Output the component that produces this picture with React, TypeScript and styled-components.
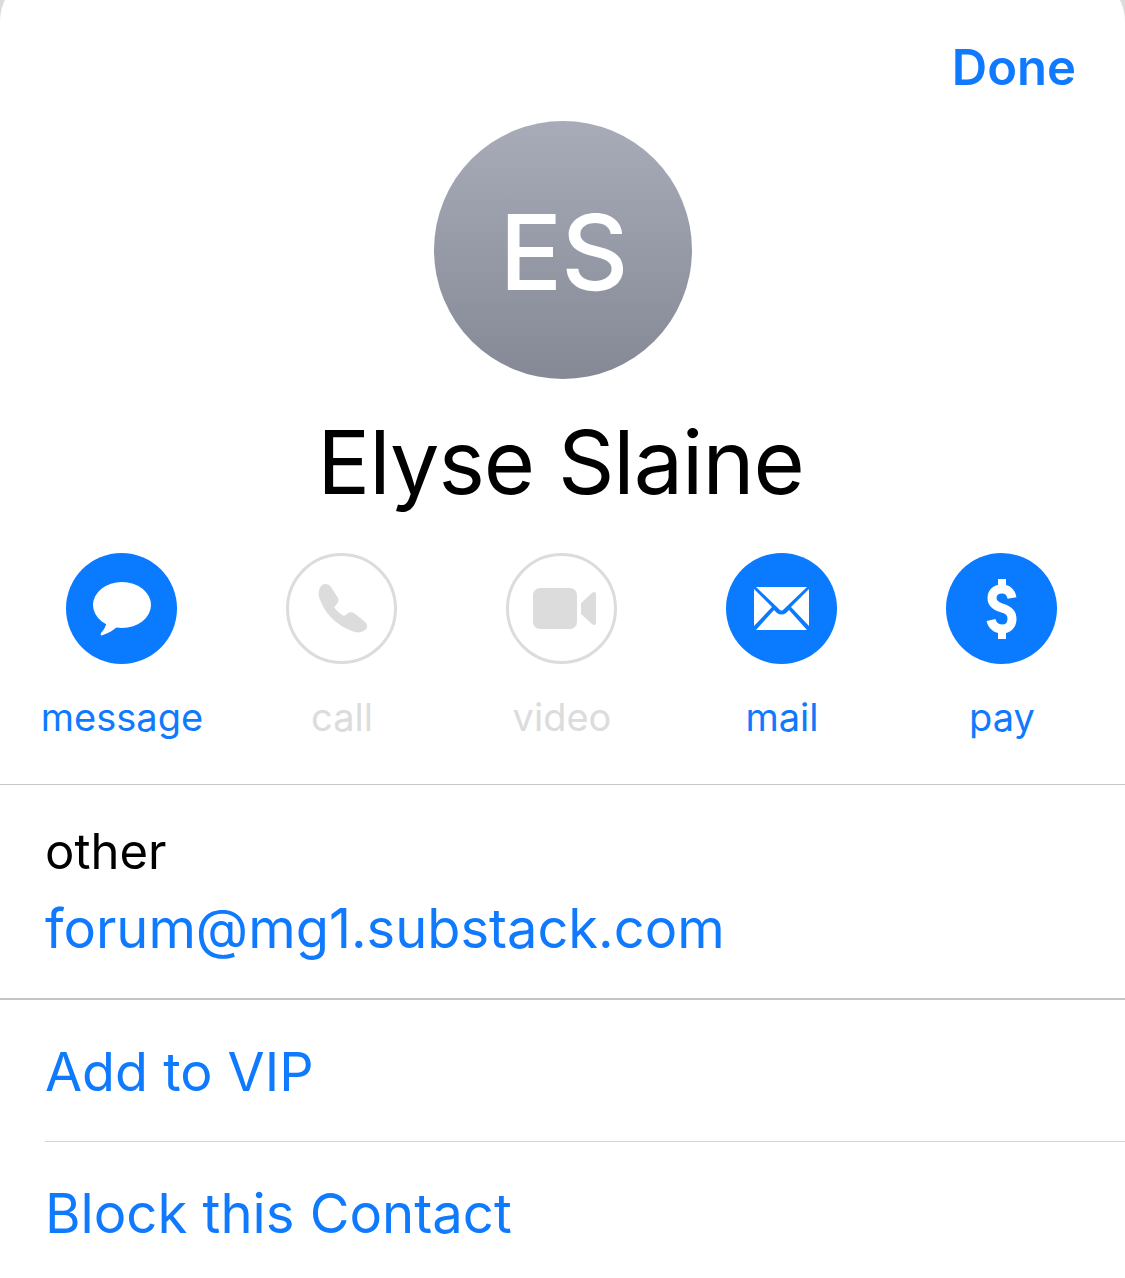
import React from 'react'
import styled, { createGlobalStyle } from 'styled-components'

const blue = '#107aff'
const actionBlue = '#0a7aff'
const muted = '#dcdcdc'

const GlobalStyle = createGlobalStyle`
  html, body {
    margin: 0;
    padding: 0;
    height: 1278px;
    overflow: hidden;
    background: #dcdcdc;
    font-family: Inter, "Liberation Sans", sans-serif;
  }
`

const Sheet = styled.main`
  margin-top: -29px;
  height: 1307px;
  background: #fff;
  border-radius: 51px 51px 0 0;
  overflow: hidden;
`

const TopBar = styled.header`
  display: flex;
  justify-content: flex-end;
  height: 150px;
  padding: 71px 49px 0 0;
  box-sizing: border-box;
`

const DoneButton = styled.button`
  border: 0;
  padding: 0;
  background: none;
  font: 600 49px/1 Inter, sans-serif;
  color: ${blue};
  height: 50px;
`

const Hero = styled.section`
  display: flex;
  flex-direction: column;
  align-items: center;
`

const Avatar = styled.div`
  width: 258px;
  height: 258px;
  box-sizing: border-box;
  padding: 4px 0 0 2px;
  border-radius: 50%;
  background: linear-gradient(#a7acb8, #858995);
  color: #fff;
  display: flex;
  align-items: center;
  justify-content: center;
  font-size: 104px;
  font-weight: 540;
  letter-spacing: -1px;
`

const Name = styled.h1`
  margin: 28px 4px 0 0;
  font-size: 88px;
  line-height: 110px;
  font-weight: 400;
  color: #000;
  letter-spacing: -1px;
`

const Actions = styled.nav`
  display: grid;
  grid-template-columns: repeat(5, 220px);
  padding: 36px 0 0 11px;
  height: 268px;
  box-sizing: border-box;
  border-bottom: 1px solid #c8c8c8;
`

const Action = styled.div<{ $off?: boolean }>`
  display: flex;
  flex-direction: column;
  align-items: center;
  color: ${(p) => (p.$off ? muted : blue)};
  font-size: 38px;
  line-height: 44px;
`

const ActionLabel = styled.span`
  margin: 31px 0 0 2px;
`

const Disc = styled.div<{ $off?: boolean }>`
  width: 111px;
  height: 111px;
  box-sizing: border-box;
  border-radius: 50%;
  background: ${(p) => (p.$off ? '#fff' : actionBlue)};
  border: ${(p) => (p.$off ? `3px solid ${muted}` : '0')};
  display: flex;
  align-items: center;
  justify-content: center;
`

const Glyph = styled.svg`
  width: 111px;
  height: 111px;
  flex: none;
`

const EmailRow = styled.section`
  height: 215px;
  padding: 37px 0 0 45px;
  box-sizing: border-box;
  border-bottom: 2px solid #c4c4c4;
`

const RowLabel = styled.div`
  font-size: 49px;
  line-height: 60px;
  color: #000;
`

const EmailLink = styled.a`
  display: block;
  margin-top: 11px;
  font-size: 54.2px;
  line-height: 70px;
  color: ${blue};
`

const LinkRow = styled.a<{ $last?: boolean }>`
  display: block;
  margin-left: 45px;
  height: 141px;
  line-height: 143px;
  font-size: ${(p) => (p.$last ? '54.4px' : '53.8px')};
  color: ${blue};
  border-bottom: ${(p) => (p.$last ? '0' : '1px solid #d4d4d4')};
`

const MessageIcon = () => (
  <Glyph viewBox="0 0 111 111">
    <ellipse cx="56" cy="52" rx="29" ry="23" fill="#fff" />
    <path d="M41 68 C40 73 38 77 35 80 C34 82 35 83 37 82 C43 80 48 77 52 73 Z" fill="#fff" />
  </Glyph>
)

const PhoneIcon = () => (
  <Glyph viewBox="0 0 111 111">
    <path
      d="M36 32 C39 30 43 31 45 34 L52 45 C53 48 52 50 50 52 L48 54 C50 57 54 61 58 63 L61 61 C63 59 66 59 68 60 L78 68 C82 71 82 75 79 77 C75 80 70 80 66 78 C50 72 38 60 33 44 C32 39 33 35 36 32 Z"
      fill={muted}
    />
  </Glyph>
)

const VideoIcon = () => (
  <Glyph viewBox="0 0 111 111">
    <rect x="27" y="35" width="44" height="41" rx="7" fill={muted} />
    <path d="M75 50 L86 40 C88 38 90 39 90 41 V70 C90 72 88 73 86 71 L75 61 Z" fill={muted} />
  </Glyph>
)

const MailIcon = () => (
  <Glyph viewBox="0 0 111 111">
    <path d="M30 34 H81 L58 56 C56 58 55 58 53 56 Z" fill="#fff" />
    <path d="M28 36 L46 54 L28 73 Z" fill="#fff" />
    <path d="M83 36 L65 54 L83 73 Z" fill="#fff" />
    <path d="M30 77 L48 57 L51 60 C54 62 57 62 60 60 L63 57 L81 77 Z" fill="#fff" />
  </Glyph>
)

const DollarIcon = () => (
  <Glyph viewBox="0 0 111 111">
    <path
      d="M66 45 C65 39 61 36 56 36 C49 36 46 40 46 45 C46 50 49 53 56 55 C63 57 66 60 66 66 C66 72 62 76 56 76 C50 76 46 72 45 67"
      fill="none"
      stroke="#fff"
      strokeWidth="9"
    />
    <path d="M52 26 H60 V36 H52 Z M52 76 H60 V86 H52 Z" fill="#fff" />
  </Glyph>
)

const actions = [
  { label: 'message', icon: <MessageIcon /> },
  { label: 'call', icon: <PhoneIcon />, off: true },
  { label: 'video', icon: <VideoIcon />, off: true },
  { label: 'mail', icon: <MailIcon /> },
  { label: 'pay', icon: <DollarIcon /> },
]

const App = () => (
  <>
    <GlobalStyle />
    <Sheet>
      <TopBar>
        <DoneButton>Done</DoneButton>
      </TopBar>
      <Hero>
        <Avatar>ES</Avatar>
        <Name>Elyse Slaine</Name>
      </Hero>
      <Actions>
        {actions.map((a) => (
          <Action key={a.label} $off={a.off}>
            <Disc $off={a.off}>{a.icon}</Disc>
            <ActionLabel>{a.label}</ActionLabel>
          </Action>
        ))}
      </Actions>
      <EmailRow>
        <RowLabel>other</RowLabel>
        <EmailLink>forum@mg1.substack.com</EmailLink>
      </EmailRow>
      <LinkRow>Add to VIP</LinkRow>
      <LinkRow $last>Block this Contact</LinkRow>
    </Sheet>
  </>
)

export default App
